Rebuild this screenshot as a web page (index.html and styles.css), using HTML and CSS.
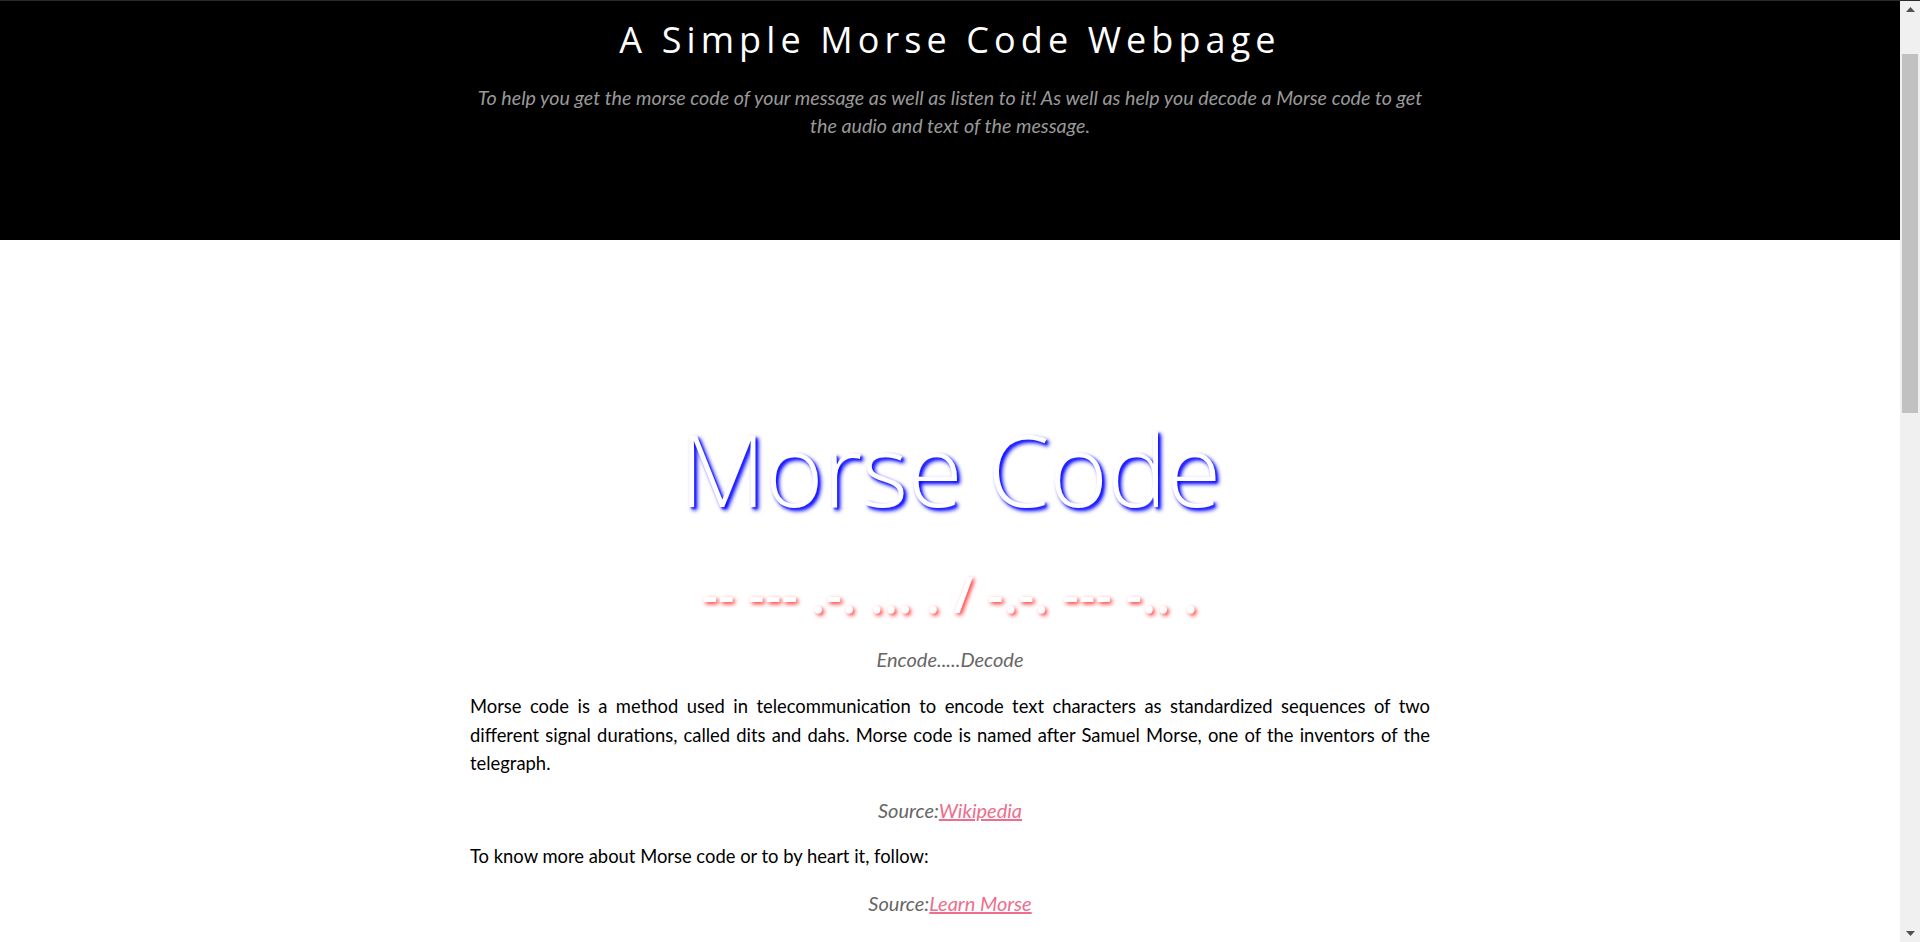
FILE: index.html
```html
<!DOCTYPE html>
<html lang="en">
<head>
<meta charset="utf-8">
<title>A Simple Morse Code Webpage</title>
<link rel="stylesheet" href="styles.css">
</head>
<body>
<div class="page">
  <header class="hero">
    <h1 class="site-title">A Simple Morse Code Webpage</h1>
    <p class="tagline">To help you get the morse code of your message as well as listen to it! As well as help you decode a Morse code to get the audio and text of the message.</p>
  </header>
  <main class="content">
    <h2 class="big-title">Morse Code</h2>
    <p class="morse">-- --- .-. ... . / -.-. --- -.. .</p>
    <p class="sub">Encode.....Decode</p>
    <p class="body-text">Morse code is a method used in telecommunication to encode text characters as standardized sequences of two different signal durations, called dits and dahs. Morse code is named after Samuel Morse, one of the inventors of the telegraph.</p>
    <p class="source">Source:<a href="#">Wikipedia</a></p>
    <p class="body-text">To know more about Morse code or to by heart it, follow:</p>
    <p class="source">Source:<a href="#">Learn Morse</a></p>
  </main>
</div>
<aside class="scrollbar" aria-hidden="true">
  <div class="sb-btn">
    <svg width="9" height="5" viewBox="0 0 9 5"><path d="M0 5 L4.5 0 L9 5 Z" fill="#505050"/></svg>
  </div>
  <div class="sb-track">
    <div class="sb-thumb"></div>
  </div>
  <div class="sb-btn">
    <svg width="9" height="5" viewBox="0 0 9 5"><path d="M0 0 L9 0 L4.5 5 Z" fill="#505050"/></svg>
  </div>
</aside>
</body>
</html>
```

FILE: styles.css
```css
html, body {
  margin: 0;
  padding: 0;
  background: #fff;
}

body {
  display: flex;
  align-items: flex-start;
  border-top: 1px solid #2b2b2b;
  font-family: "Lato", "Open Sans", sans-serif;
  color: #000;
}

.page {
  flex: 1;
  min-width: 0;
}

.hero {
  background: #000;
  height: 239px;
  padding-top: 17px;
  box-sizing: border-box;
  text-align: center;
}

.site-title {
  margin: 0;
  font-family: "Open Sans", sans-serif;
  font-weight: 400;
  font-size: 36px;
  line-height: 44px;
  letter-spacing: 5.1px;
  color: #fff;
}

.tagline {
  margin: 22px auto 0;
  max-width: 960px;
  font-style: italic;
  font-size: 19.7px;
  line-height: 28px;
  color: #999;
}

.content {
  width: 960px;
  margin: 0 auto;
  padding-top: 168px;
  padding-bottom: 40px;
}

.big-title {
  margin: 0;
  font-family: "Open Sans", sans-serif;
  font-weight: 300;
  font-size: 100px;
  line-height: 120px;
  letter-spacing: -0.5px;
  text-align: center;
  color: #fff;
  text-shadow: 3px 3px 4px #0000ff, 2px 2px 2px rgba(0, 0, 255, 0.6);
}

.morse {
  margin: 37px 0 0;
  font-family: "Open Sans", sans-serif;
  font-weight: 600;
  font-size: 50px;
  line-height: 58px;
  letter-spacing: 0.5px;
  text-align: center;
  color: #fff;
  text-shadow: 2px 2px 4px #ff3030;
}

.sub {
  margin: 22px 0 0;
  font-style: italic;
  font-size: 20px;
  line-height: 28.8px;
  text-align: center;
  color: #666;
}

.body-text {
  margin: 18px 0 0;
  font-size: 18.4px;
  line-height: 28.8px;
  text-align: justify;
}

.source {
  margin: 17.5px 0 0;
  font-style: italic;
  font-size: 20px;
  line-height: 28.8px;
  text-align: center;
  color: #666;
}

.source a {
  color: #ee6e8c;
  text-decoration: underline;
}

.scrollbar {
  position: sticky;
  top: 0;
  flex: none;
  width: 20px;
  height: 941px;
  display: flex;
  flex-direction: column;
  background: #f0f0f0;
}

.sb-btn {
  height: 17px;
  display: flex;
  align-items: center;
  justify-content: center;
}

.sb-track {
  flex: 1;
  padding: 36px 2px 0;
}

.sb-thumb {
  height: 359px;
  background: #c1c1c1;
}
```
